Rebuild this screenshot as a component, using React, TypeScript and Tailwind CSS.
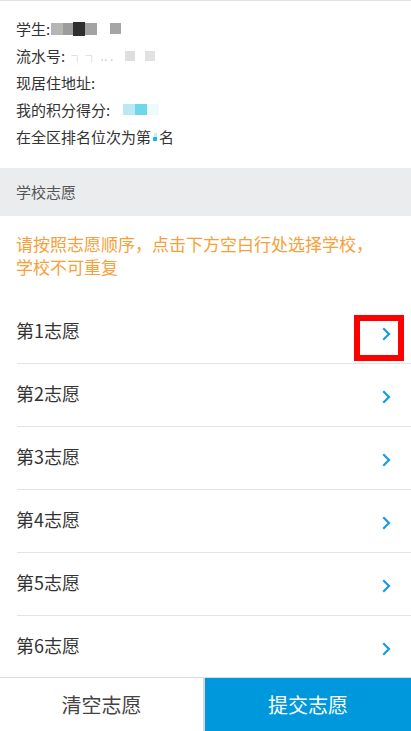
import React from "react";

const font = { fontFamily: '"Noto Sans CJK SC", "Noto Sans", sans-serif' };

function Chevron() {
  return (
    <svg width="9" height="14" viewBox="0 0 9 14" fill="none">
      <path d="M2 2l5 5-5 5" stroke="#1a9be0" strokeWidth="2.2" strokeLinecap="square" />
    </svg>
  );
}

const choices = ["第1志愿", "第2志愿", "第3志愿", "第4志愿", "第5志愿", "第6志愿"];

export default function App() {
  return (
    <div className="min-h-[731px] bg-white text-[#333]" style={font}>
      {/* student info */}
      <div className="border-t border-[#e2e2e2] pt-[14px] pb-[18px] px-[16px] text-[15px] leading-[27px]">
        <div className="flex items-center">
          学生:
          <span className="ml-[1px] inline-block w-[12px] h-[12px] bg-[#b5b5b5]"></span>
          <span className="inline-block w-[10px] h-[12px] bg-[#9c9c9c]"></span>
          <span className="inline-block w-[12px] h-[14px] bg-[#2f2f2f]"></span>
          <span className="inline-block w-[12px] h-[12px] bg-[#a3a3a3]"></span>
          <span className="ml-[13px] inline-block w-[11px] h-[11px] bg-[#a5a5a5]"></span>
        </div>
        <div className="flex items-center">
          流水号:
          <span className="ml-[6px] text-[#ccc] text-[12px]">┐ ┐ .. .</span>
          <span className="ml-[12px] inline-block w-[10px] h-[10px] bg-[#dedede]"></span>
          <span className="ml-[10px] inline-block w-[10px] h-[10px] bg-[#e2e2e2]"></span>
        </div>
        <div>现居住地址:</div>
        <div className="flex items-center">
          我的积分得分:
          <span className="ml-[13px] inline-block w-[12px] h-[11px] bg-[#b9eaf4]"></span>
          <span className="inline-block w-[12px] h-[11px] bg-[#6ed8ea]"></span>
          <span className="inline-block w-[12px] h-[11px] bg-[#eefafd]"></span>
        </div>
        <div className="flex items-center">
          在全区排名位次为第
          <span className="inline-flex w-[8px] flex-col items-center justify-center">
            <span className="w-[3px] h-[4px] bg-[#c8eef6]"></span>
            <span className="w-[4px] h-[4px] bg-[#19b9e0]"></span>
          </span>
          名
        </div>
      </div>

      {/* section header */}
      <div className="h-[48px] bg-[#ebecee] px-[16px] flex items-center text-[15px] text-[#555]">
        学校志愿
      </div>

      <div className="pt-[16px] pb-[23px] pl-[16px] pr-[30px] text-[17px] leading-[23px] text-[#f7a03a]">
        请按照志愿顺序，点击下方空白行处选择学校，学校不可重复
      </div>

      {/* choices */}
      <div className="pl-[17px] pb-[54px]">
        {choices.map((c, i) => (
          <div
            key={c}
            className="relative h-[63px] border-b border-[#e4e4e4] flex items-center justify-between pr-[20px] text-[18px] text-[#333]"
          >
            <span className="-mt-[4px] -ml-[1px]">{c}</span>
            <span className="mt-[4px]">
              <Chevron />
            </span>
            {i === 0 && (
              <div className="absolute left-[337px] top-[14px] w-[50px] h-[46px] border-[6px] border-[#ff0000]"></div>
            )}
          </div>
        ))}
      </div>

      {/* bottom bar */}
      <div className="fixed bottom-0 left-0 right-0 h-[54px] flex border-t border-[#dcdcdc] bg-white text-[20px]">
        <button className="w-[205px] border-r-[2px] border-[#d8d8d8] text-[#444]">清空志愿</button>
        <button className="flex-1 bg-[#0098dc] text-white">提交志愿</button>
      </div>
    </div>
  );
}
